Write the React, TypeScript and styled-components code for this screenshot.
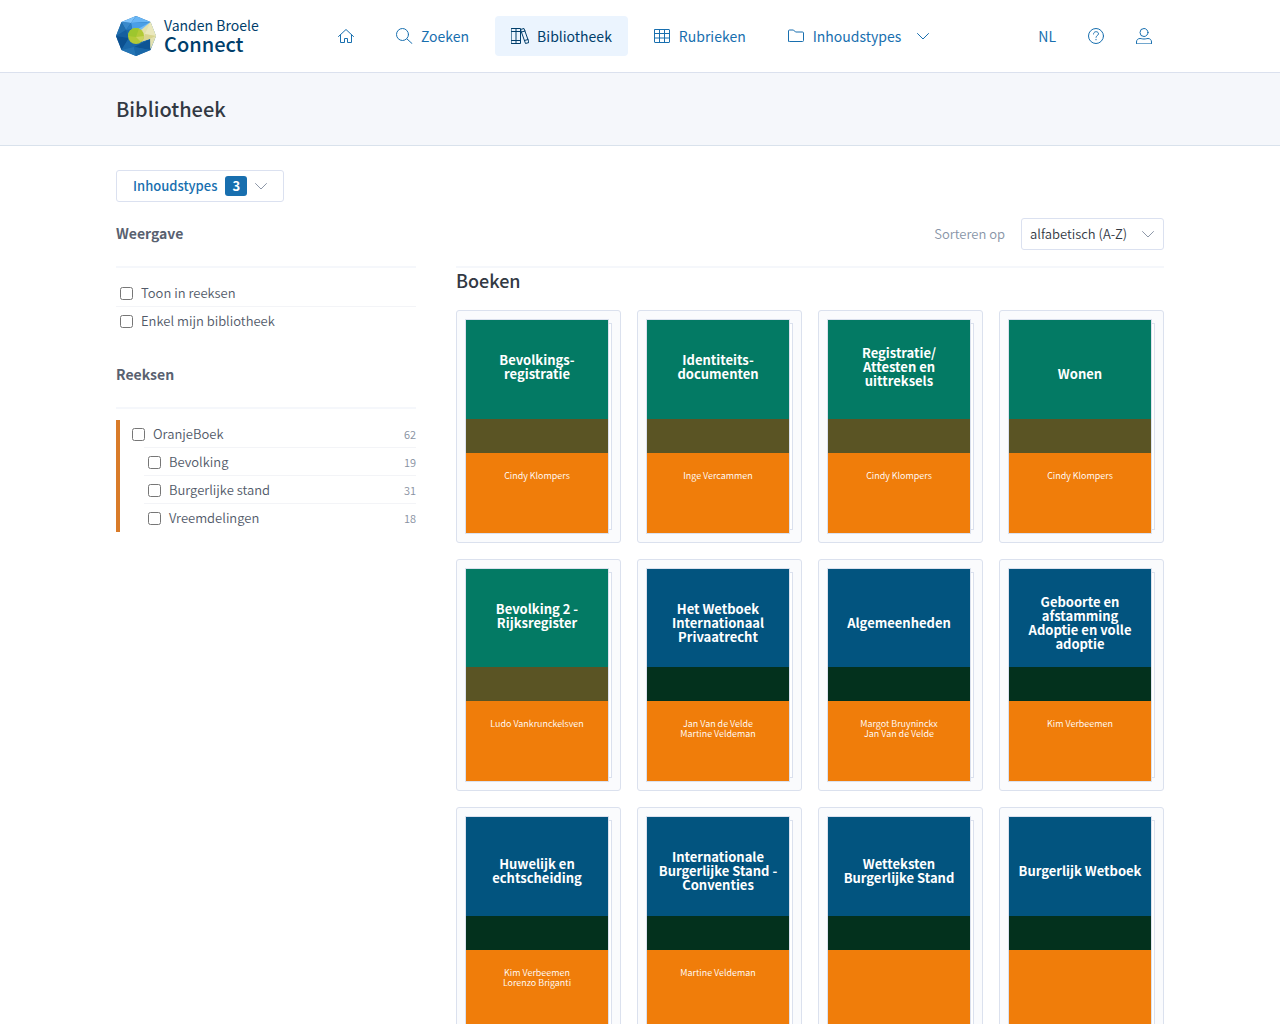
import React from 'react';
import styled, { createGlobalStyle, css } from 'styled-components';

const GlobalStyle = createGlobalStyle`
  *, *::before, *::after { box-sizing: border-box; }
  body {
    margin: 0;
    background: #fff;
    color: #525a69;
    font-family: "Source Sans Pro", "Noto Sans CJK JP", "Noto Sans", sans-serif;
    font-size: 13px;
    font-weight: 350;
    line-height: 20px;
  }
  h1, h2, h3, p, ul { margin: 0; padding: 0; }
  ul { list-style: none; }
  button, select { font: inherit; }
`;

const Container = styled.div`
  max-width: 1080px;
  margin: 0 auto;
  padding: 0 16px;
`;

const Header = styled.header`
  border-bottom: 1px solid #dbe1ee;
`;

const HeaderRow = styled(Container)`
  display: flex;
  align-items: center;
  height: 72px;
`;

const Brand = styled.a`
  display: flex;
  align-items: center;
  gap: 8px;
  width: 206px;
  color: #003e6b;
  text-decoration: none;
`;

const BrandText = styled.span`
  display: flex;
  flex-direction: column;
  padding-bottom: 2px;
`;

const BrandOwner = styled.span`
  font-size: 14px;
  font-weight: 400;
  line-height: 18px;
`;

const BrandName = styled.strong`
  font-size: 20px;
  font-weight: 500;
  line-height: 20px;
`;

const Nav = styled.nav<{ $end?: boolean }>`
  display: flex;
  gap: 10px;
  ${(p) => p.$end && css`
    gap: 8px;
    margin-left: auto;
  `}
`;

const NavLink = styled.a<{ $active?: boolean; $tight?: boolean }>`
  display: flex;
  align-items: center;
  gap: 8px;
  height: 40px;
  padding: 0 ${(p) => (p.$tight ? 12 : 16)}px;
  border-radius: 4px;
  background: ${(p) => (p.$active ? '#ebf4fe' : 'transparent')};
  color: ${(p) => (p.$active ? '#003e6b' : '#186faf')};
  font-size: 14px;
  font-weight: 400;
  text-decoration: none;
`;

const Icon = styled.svg`
  display: block;
  flex: none;
  fill: none;
  stroke: currentColor;
  stroke-width: 1;
  stroke-linecap: round;
  stroke-linejoin: round;
`;

const MenuMark = styled.span`
  margin-left: 8px;
`;

const TitleBand = styled.div`
  padding: 20px 0;
  border-bottom: 1px solid #d9e2ec;
  background: #f5f7fb;
`;

const PageTitle = styled.h1`
  color: #323943;
  font-size: 20px;
  font-weight: 500;
  line-height: 32px;
`;

const FilterBar = styled.div`
  display: flex;
  padding: 24px 0 16px;
`;

const FilterButton = styled.button`
  display: flex;
  align-items: center;
  gap: 8px;
  height: 32px;
  padding: 0 16px;
  border: 1px solid #dbe1f0;
  border-radius: 3px;
  background: #fff;
  color: #186faf;
  font-weight: 500;
  cursor: pointer;
`;

const Count = styled.span`
  padding: 0 7px;
  border-radius: 3px;
  background: #186faf;
  color: #fff;
  font-weight: 700;
`;

const Muted = styled.span`
  color: #8d97a8;
`;

const Columns = styled.div`
  display: grid;
  grid-template-columns: 300px minmax(0, 1fr);
  column-gap: 40px;
  align-items: start;
`;

const SectionHead = styled.h2`
  height: 50px;
  border-bottom: 2px solid #f5f7fb;
  color: #596170;
  font-size: 14px;
  font-weight: 700;
  line-height: 30px;
`;

const Section = styled.section`
  & + & { margin-top: 24px; }
`;

const Options = styled.ul<{ $accent?: boolean }>`
  margin-top: 11px;
  ${(p) => p.$accent && css`
    padding-left: 8px;
    border-left: 4px solid #d97b29;
  `}
`;

const Option = styled.li<{ $child?: boolean }>`
  display: flex;
  align-items: center;
  height: 28px;
  padding-left: 4px;
  ${(p) => p.$child && css`
    margin-left: 16px;
  `}
`;

const OptionRule = styled.li<{ $nested?: boolean }>`
  height: 1px;
  margin-top: -1px;
  margin-left: ${(p) => (p.$nested ? 16 : 0)}px;
  background: #f3f4f7;
`;

const OptionLabel = styled.label`
  display: flex;
  align-items: center;
  gap: 8px;
  flex: 1;
`;

const Tick = styled.input`
  width: 13px;
  height: 13px;
  margin: 0;
`;

const OptionCount = styled.span`
  color: #8791a1;
  font-size: 11px;
`;

const SortBar = styled.div`
  display: flex;
  justify-content: flex-end;
  gap: 16px;
  height: 50px;
  border-bottom: 2px solid #f5f7fb;
`;

const SortLabel = styled.label`
  color: #8895a7;
  line-height: 32px;
`;

const SelectBox = styled.div`
  display: grid;
  grid-template-columns: 143px;
  align-items: center;
  justify-items: end;
  height: 32px;
  color: #8d97a8;
  & > * { grid-area: 1 / 1; }
  & > svg { margin-right: 10px; pointer-events: none; }
`;

const Select = styled.select`
  appearance: none;
  width: 100%;
  height: 32px;
  padding: 0 28px 0 8px;
  border: 1px solid #dbe1f0;
  border-radius: 3px;
  background: #fff;
  color: #323943;
`;

const GroupTitle = styled.h2`
  margin-bottom: 18px;
  color: #323943;
  font-size: 18px;
  font-weight: 500;
  line-height: 24px;
`;

const Shelf = styled.ul`
  display: grid;
  grid-template-columns: repeat(4, minmax(0, 1fr));
  gap: 16px;
`;

const Card = styled.a`
  display: flex;
  padding: 8px;
  border: 1px solid #dbe1ee;
  border-radius: 3px;
  background: #fafbfd;
  text-decoration: none;
`;

const Cover = styled.div`
  display: grid;
  grid-template-rows: 99fr 34fr 80fr;
  flex: 1;
  aspect-ratio: 432 / 644;
  border: 1px solid #dbe1ee;
  color: #fff;
  text-align: center;
`;

const Pages = styled.div`
  width: 3px;
  margin: 4px 0;
  border: 1px solid #dbe1ee;
  border-left: 0;
  background: #fff;
`;

const CoverTitle = styled.h3<{ $tone: Tone; $raised?: boolean }>`
  display: flex;
  align-items: center;
  justify-content: center;
  padding-top: 9px;
  padding-bottom: ${(p) => (p.$raised ? 14 : 0)}px;
  background: ${(p) => tones[p.$tone].top};
  font-size: 13px;
  font-weight: 700;
  line-height: 14px;
  white-space: pre-line;
`;

const CoverBand = styled.div<{ $tone: Tone }>`
  background: ${(p) => tones[p.$tone].band};
`;

const Authors = styled.p`
  padding-top: 18px;
  background: #f07d0a;
  color: #fff;
  font-size: 9px;
  font-weight: 350;
  line-height: 10px;
  white-space: pre-line;
`;

type Tone = 'green' | 'blue';

const tones = {
  green: { top: '#037a64', band: '#5a5424' },
  blue: { top: '#02547f', band: '#03311d' },
};

interface Book {
  title: string;
  authors: string;
  tone: Tone;
  raised?: boolean;
}

const books: Book[] = [
  { title: 'Bevolkings-\nregistratie', authors: 'Cindy Klompers', tone: 'green', raised: true },
  { title: 'Identiteits-\ndocumenten', authors: 'Inge Vercammen', tone: 'green', raised: true },
  { title: 'Registratie/\nAttesten en\nuittreksels', authors: 'Cindy Klompers', tone: 'green', raised: true },
  { title: 'Wonen', authors: 'Cindy Klompers', tone: 'green' },
  { title: 'Bevolking 2 -\nRijksregister', authors: 'Ludo Vankrunckelsven', tone: 'green', raised: true },
  { title: 'Het Wetboek\nInternationaal\nPrivaatrecht', authors: 'Jan Van de Velde\nMartine Veldeman', tone: 'blue' },
  { title: 'Algemeenheden', authors: 'Margot Bruyninckx\nJan Van de Velde', tone: 'blue' },
  { title: 'Geboorte en\nafstamming\nAdoptie en volle\nadoptie', authors: 'Kim Verbeemen', tone: 'blue' },
  { title: 'Huwelijk en\nechtscheiding', authors: 'Kim Verbeemen\nLorenzo Briganti', tone: 'blue' },
  { title: 'Internationale\nBurgerlijke Stand -\nConventies', authors: 'Martine Veldeman', tone: 'blue' },
  { title: 'Wetteksten\nBurgerlijke Stand', authors: '', tone: 'blue' },
  { title: 'Burgerlijk Wetboek', authors: '', tone: 'blue' },
];

const series = [
  { id: 'oranjeboek', name: 'OranjeBoek', count: 62 },
  { id: 'bevolking', name: 'Bevolking', count: 19, child: true },
  { id: 'burgerlijke-stand', name: 'Burgerlijke stand', count: 31, child: true },
  { id: 'vreemdelingen', name: 'Vreemdelingen', count: 18, child: true },
];

const Logo = () => (
  <svg width="40" height="40" viewBox="0 0 40 40" aria-hidden="true">
    <path d="M20 0 34.500 6 40 20 34.500 34 20 40 5.500 34 0 20 5.500 6Z" fill="#1b69a9" />
    <path d="M20 0 5.500 6 15 7Z" fill="#7cc2fa" />
    <path d="M20 0 34.500 6 15 7Z" fill="#69b6f5" />
    <path d="M5.500 6 15 7 10 14Z" fill="#3a8acb" />
    <path d="M15 7 34.500 6 24 14 16 13Z" fill="#4a9fe6" />
    <path d="M34.500 6 28 15 22 13Z" fill="#74bcf7" />
    <path d="M15 7 10 14 16 13Z" fill="#2b7ec2" />
    <path d="M5.500 6 10 14 0 20Z" fill="#226fae" />
    <path d="M0 20 10 14 13 22Z" fill="#165f9f" />
    <path d="M0 20 13 22 5.500 34Z" fill="#0b5090" />
    <path d="M5.500 34 13 22 18 31Z" fill="#1a68a9" />
    <path d="M5.500 34 18 31 20 40Z" fill="#2474b4" />
    <path d="M18 31 34.300 23 34.500 34Z" fill="#0e5594" />
    <path d="M18 31 34.500 34 20 40Z" fill="#1967a8" />
    <path d="M34.500 6 40 20 34.500 33 34.300 22.800 26 25.500 25 14Z" fill="#e3e1ac" />
    <path d="M34.500 6 40 20 29 18Z" fill="#eae8bd" />
    <path d="M29 18 40 20 34.300 22.800 26 25.500Z" fill="#d9d58f" />
    <path d="M40 20 34.500 33 34.300 22.800Z" fill="#e3e1b0" />
    <circle cx="20" cy="20" r="8" fill="#b2ca36" />
    <path d="M20 12a8 8 0 0 0-8 8l8 1 3-8.500a8 8 0 0 0-3-.5Z" fill="#9dc62e" />
    <path d="m20 21 8-1a8 8 0 0 1-3 6Z" fill="#c9d45d" />
  </svg>
);

const Home = () => (
  <Icon width="16" height="16" viewBox="0 0 16 16">
    <path d="M.5 8.500 8 1.500l7.500 7M2.500 7v7.500h4v-4h3v4h4V7" />
  </Icon>
);

const Search = () => (
  <Icon width="17" height="16" viewBox="0 0 17 16">
    <circle cx="6.500" cy="6.500" r="6" />
    <path d="m11 11 5 4.500" />
  </Icon>
);

const Books = () => (
  <Icon width="18" height="16" viewBox="0 0 18 16">
    <path d="M.5.5h9v15h-9zM5 .5v15M.5 3.500h9M.5 12.500h9M9.500 1.500 13 .5l5 14-3.500 1-5-14M10.500 4l3.500-1M13.500 12.500l3.500-1" />
  </Icon>
);

const Grid = () => (
  <Icon width="17" height="16" viewBox="0 0 17 16">
    <rect x=".5" y="1.500" width="15" height="13" rx=".5" />
    <path d="M.5 5.500h15M.5 10h15M5.500 1.500v13M10.500 1.500v13" />
  </Icon>
);

const Folder = () => (
  <Icon width="17" height="16" viewBox="0 0 17 16">
    <path d="M.5 13V3a1 1 0 0 1 1-1h4l2 2h7a1 1 0 0 1 1 1v7.500a1 1 0 0 1-1 1h-13a1 1 0 0 1-1-1Z" />
  </Icon>
);

const Chevron = () => (
  <Icon width="12" height="12" viewBox="0 0 12 12">
    <path d="m.5 3.500 5.500 5.500 5.500-5.500" />
  </Icon>
);

const Help = () => (
  <Icon width="16" height="16" viewBox="0 0 16 16">
    <circle cx="8" cy="8" r="7.500" />
    <path d="M5.500 6c0-3.200 5-3 5-.2C10.500 7.500 8 7.500 8 9.300M8 11.300v.5" />
  </Icon>
);

const User = () => (
  <Icon width="16" height="16" viewBox="0 0 16 16">
    <circle cx="8" cy="4.500" r="4" />
    <path d="M.5 15.500V14c0-2.200 1.500-3.500 3.500-3.500 1.500 0 2 .5 4 .5s2.500-.5 4-.5c2 0 3.500 1.300 3.500 3.500v1.500Z" />
  </Icon>
);

export default function App() {
  return (
    <>
      <GlobalStyle />
      <Header>
        <HeaderRow>
          <Brand href="#">
            <Logo />
            <BrandText>
              <BrandOwner>Vanden Broele</BrandOwner>
              <BrandName>Connect</BrandName>
            </BrandText>
          </Brand>
          <Nav>
            <NavLink href="#" aria-label="Home"><Home /></NavLink>
            <NavLink href="#"><Search />Zoeken</NavLink>
            <NavLink href="#" $active><Books />Bibliotheek</NavLink>
            <NavLink href="#"><Grid />Rubrieken</NavLink>
            <NavLink href="#"><Folder />Inhoudstypes<MenuMark><Chevron /></MenuMark></NavLink>
          </Nav>
          <Nav $end>
            <NavLink href="#" $tight>NL</NavLink>
            <NavLink href="#" $tight aria-label="Help"><Help /></NavLink>
            <NavLink href="#" $tight aria-label="Account"><User /></NavLink>
          </Nav>
        </HeaderRow>
      </Header>
      <TitleBand>
        <Container>
          <PageTitle>Bibliotheek</PageTitle>
        </Container>
      </TitleBand>
      <Container as="main">
        <FilterBar>
          <FilterButton type="button">
            Inhoudstypes
            <Count>3</Count>
            <Muted><Chevron /></Muted>
          </FilterButton>
        </FilterBar>
        <Columns>
          <aside>
            <Section>
              <SectionHead>Weergave</SectionHead>
              <Options>
                <Option>
                  <OptionLabel><Tick type="checkbox" />Toon in reeksen</OptionLabel>
                </Option>
                <OptionRule aria-hidden="true" />
                <Option>
                  <OptionLabel><Tick type="checkbox" />Enkel mijn bibliotheek</OptionLabel>
                </Option>
              </Options>
            </Section>
            <Section>
              <SectionHead>Reeksen</SectionHead>
              <Options $accent>
                {series.map((s, i) => (
                  <React.Fragment key={s.id}>
                    {i > 0 && <OptionRule $nested aria-hidden="true" />}
                    <Option $child={s.child}>
                      <OptionLabel><Tick type="checkbox" />{s.name}</OptionLabel>
                      <OptionCount>{s.count}</OptionCount>
                    </Option>
                  </React.Fragment>
                ))}
              </Options>
            </Section>
          </aside>
          <section>
            <SortBar>
              <SortLabel htmlFor="sort">Sorteren op</SortLabel>
              <SelectBox>
                <Select id="sort" defaultValue="az">
                  <option value="az">alfabetisch (A-Z)</option>
                </Select>
                <Chevron />
              </SelectBox>
            </SortBar>
            <GroupTitle>Boeken</GroupTitle>
            <Shelf>
              {books.map((b) => (
                <li key={b.title}>
                  <Card href="#">
                    <Cover>
                      <CoverTitle $tone={b.tone} $raised={b.raised}>{b.title}</CoverTitle>
                      <CoverBand $tone={b.tone} />
                      <Authors>{b.authors}</Authors>
                    </Cover>
                    <Pages />
                  </Card>
                </li>
              ))}
            </Shelf>
          </section>
        </Columns>
      </Container>
    </>
  );
}
